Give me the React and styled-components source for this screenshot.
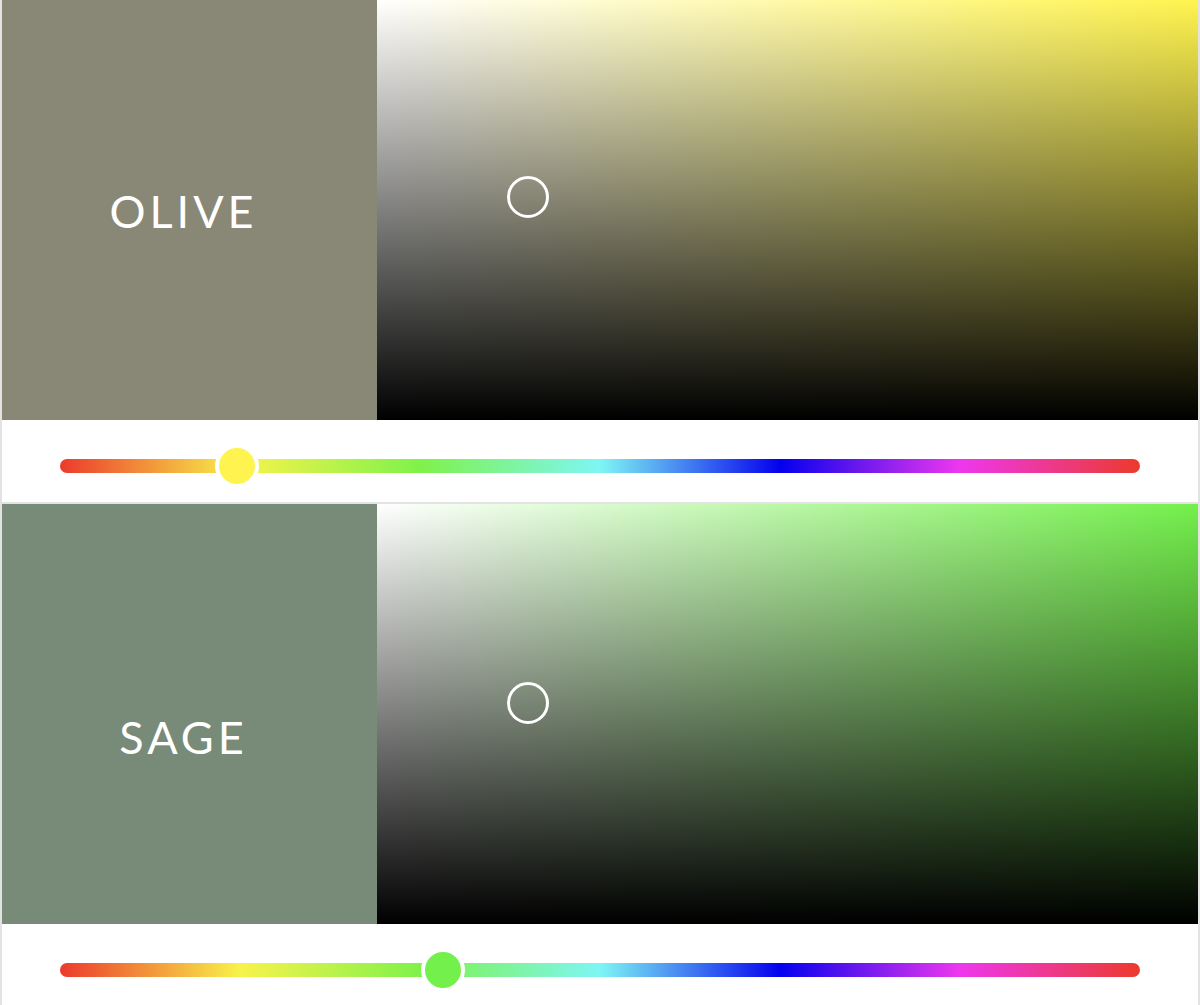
import React from 'react';
import styled, { createGlobalStyle } from 'styled-components';

const GlobalStyle = createGlobalStyle`
  body {
    margin: 0;
    background: #ffffff;
    font-family: Lato, "Liberation Sans", sans-serif;
  }
`;

const HUE_STOPS =
  '#ec3a2c 0%, #f8f34a 16.7%, #7ff24a 33.3%, #7ef6f4 50%, #0400ee 66.7%, #ee37ee 83.3%, #ec3a2c 100%';

const pickers = [
  { name: 'OLIVE', swatch: '#898775', hue: '#fff44f', huePos: 59, labelShift: 0, picker: { x: 151, y: 197 } },
  { name: 'SAGE', swatch: '#788a78', hue: '#74f04c', huePos: 127.7, labelShift: 44, picker: { x: 151, y: 199 } },
];

export default function App() {
  return (
    <>
      <GlobalStyle />
      <Page>
        {pickers.map((p) => (
          <Card key={p.name}>
            <Top>
              <Swatch color={p.swatch} shift={p.labelShift}>
                <Label>{p.name}</Label>
              </Swatch>
              <Field hue={p.hue}>
                <Handle style={{ left: `${p.picker.x}px`, top: `${p.picker.y}px` }} />
              </Field>
            </Top>
            <SliderRow>
              <Track>
                <Thumb color={p.hue} style={{ left: `${(p.huePos / 360) * 100}%` }} />
              </Track>
            </SliderRow>
          </Card>
        ))}
      </Page>
    </>
  );
}

const Page = styled.div`
  width: 1200px;
  display: flex;
  flex-direction: column;
`;

const Card = styled.div`
  border: 1px solid #e3e3e3;
  border-top: none;
  border-left-width: 2px;
  border-right-width: 2px;
  & + & {
    border-top: 1px solid #e3e3e3;
  }
`;

const Top = styled.div`
  display: flex;
  height: 420px;
`;

const Swatch = styled.div`
  width: 375px;
  flex-shrink: 0;
  box-sizing: border-box;
  padding: ${(props) => props.shift}px 12px 0 0;
  background: ${(props) => props.color};
  display: flex;
  align-items: center;
  justify-content: center;
`;

const Label = styled.div`
  color: #ffffff;
  font-family: Lato, "Liberation Sans", sans-serif;
  font-size: 45px;
  letter-spacing: 4px;
  line-height: 1;
  margin-top: 2px;
`;

const Field = styled.div`
  position: relative;
  flex: 1;
  background:
    linear-gradient(to top, #000000, rgba(0, 0, 0, 0)),
    linear-gradient(to right, #ffffff, ${(props) => props.hue});
`;

const Handle = styled.div`
  position: absolute;
  width: 36px;
  height: 36px;
  margin: -21px 0 0 -21px;
  border: 3px solid #ffffff;
  border-radius: 50%;
`;

const SliderRow = styled.div`
  height: 82px;
  display: flex;
  align-items: center;
  padding: 0 58px;
  background: #ffffff;
`;

const Track = styled.div`
  position: relative;
  flex: 1;
  height: 14px;
  margin-top: 10px;
  border-radius: 7px;
  background: linear-gradient(to right, ${HUE_STOPS});
`;

const Thumb = styled.div`
  position: absolute;
  top: 50%;
  width: 36px;
  height: 36px;
  margin: -22px 0 0 -22px;
  border: 4px solid #ffffff;
  border-radius: 50%;
  background: ${(props) => props.color};
`;
